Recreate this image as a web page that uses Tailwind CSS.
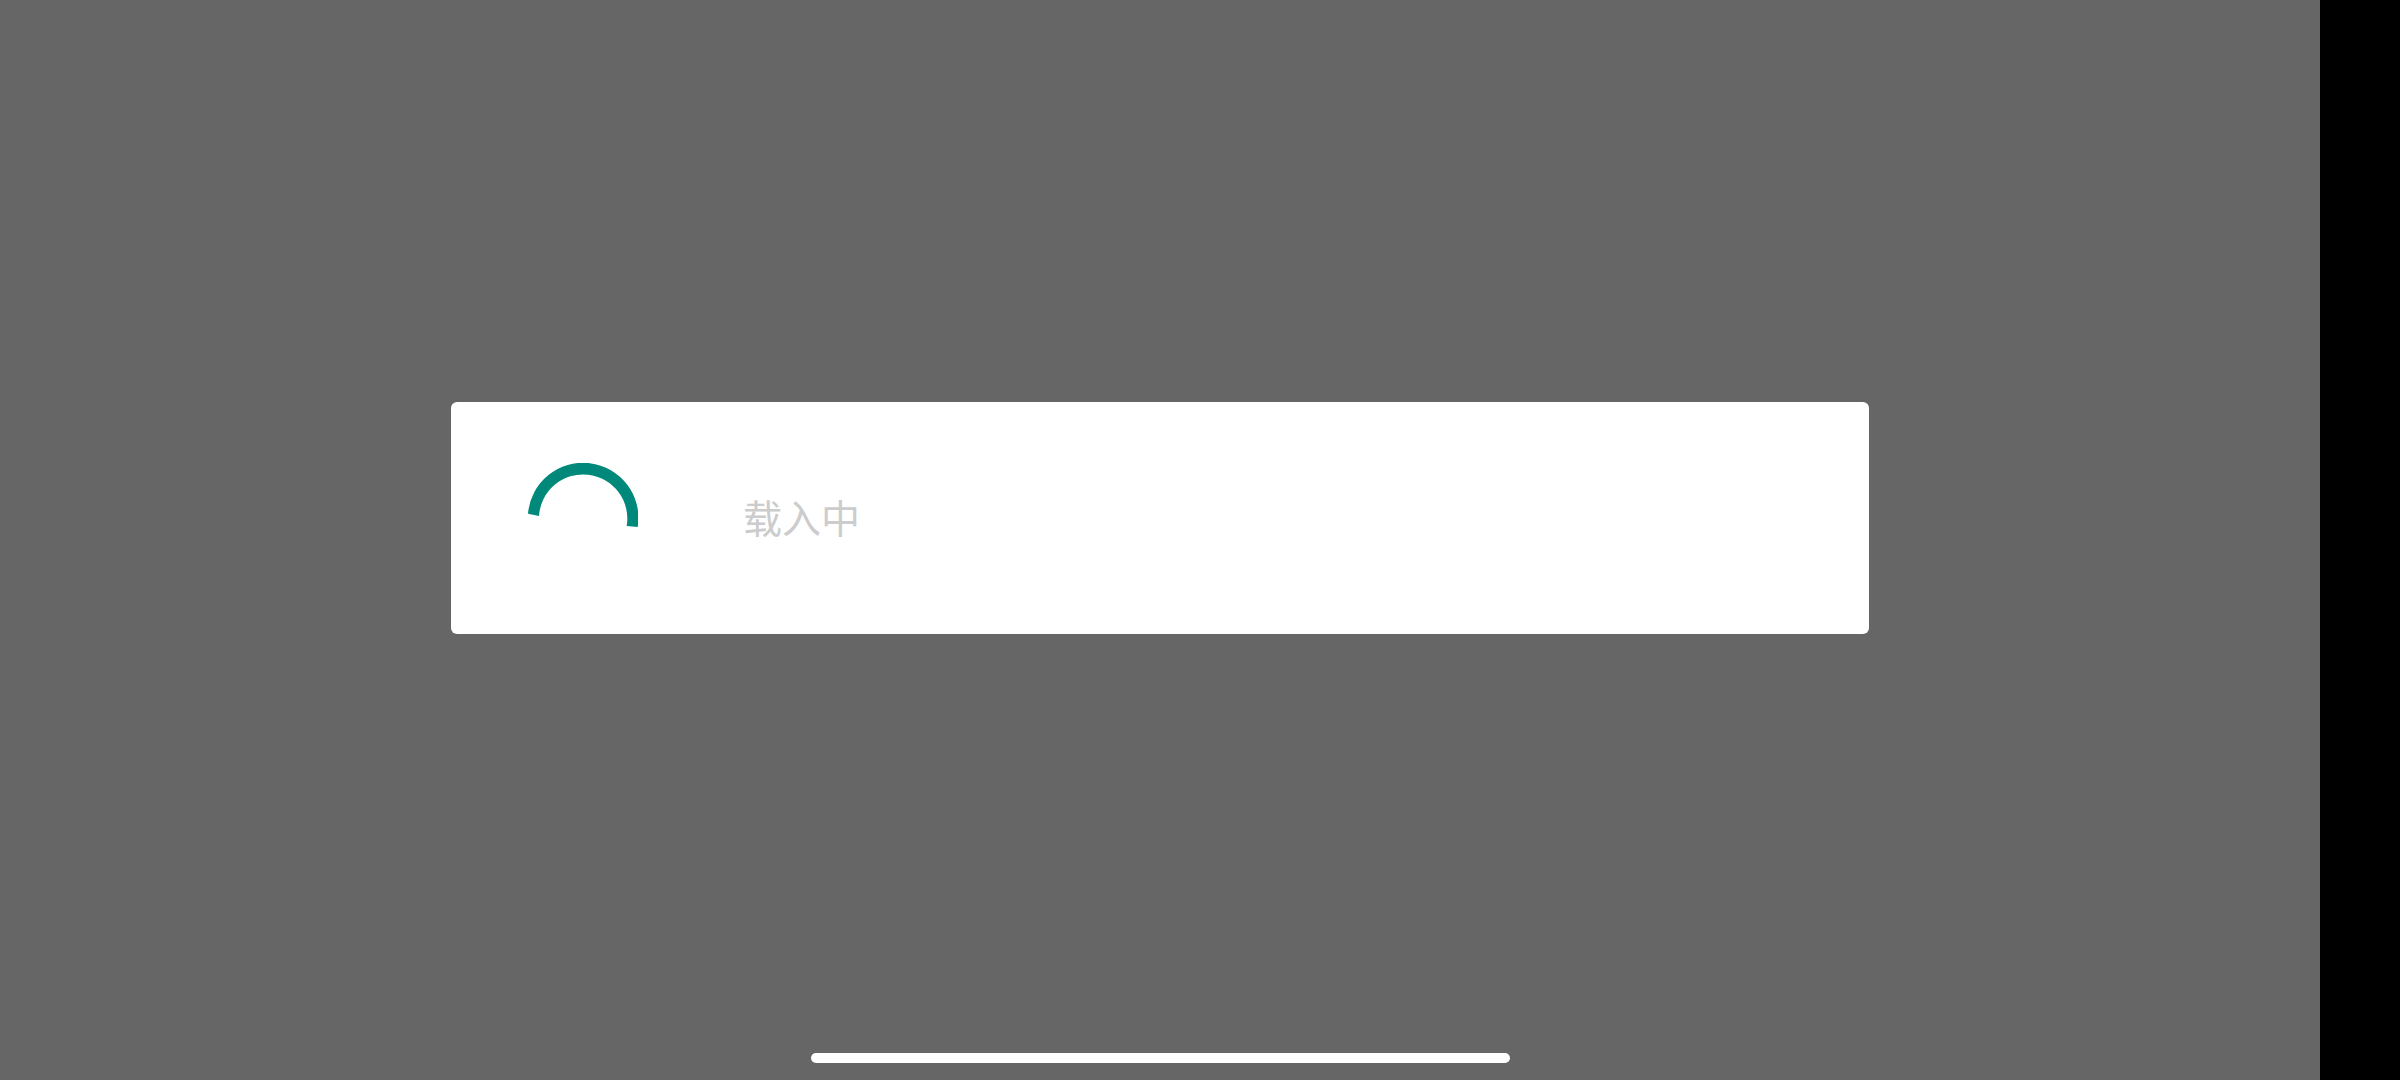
<!DOCTYPE html>
<html lang="zh">
<head>
<meta charset="utf-8">
<title>载入中</title>
<script src="https://cdn.jsdelivr.net/npm/@tailwindcss/browser@4"></script>
</head>
<body class="bg-black">
<div class="flex h-[1080px] w-[2400px] bg-black font-['Noto_Sans_CJK_SC','Noto_Sans',sans-serif]">
  <main class="flex w-[2320px] flex-col items-center bg-[#666666] pt-[402px] pb-[17px]">
    <div class="flex h-[232px] w-[1418px] items-center rounded-[6px] bg-white pl-[77px]">
      <svg class="h-[110px] w-[110px] shrink-0" viewBox="0 0 110 110">
        <path d="M0 50.7A55.3 55.3 0 1 1 109.7 64L98.7 63A44.2 44.2 0 1 0 11 53Z" fill="#00897B"/>
      </svg>
      <span class="mb-[3px] ml-[105px] text-[39px] leading-none font-normal text-[#cccccc]">载入中</span>
    </div>
    <div class="mt-auto h-[10px] w-[699px] rounded-full bg-white"></div>
  </main>
  <div class="flex-1 bg-black"></div>
</div>
</body>
</html>
